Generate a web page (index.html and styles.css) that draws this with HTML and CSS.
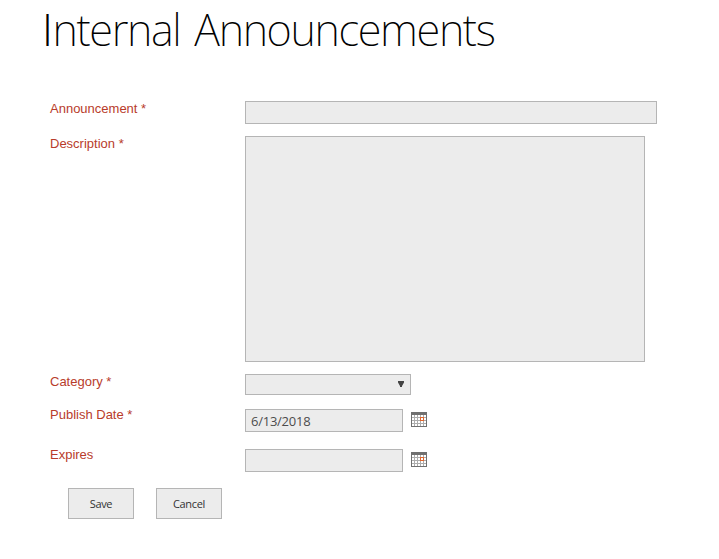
FILE: index.html
```html
<!DOCTYPE html>
<html lang="en">
<head>
<meta charset="utf-8">
<title>Internal Announcements</title>
<link rel="stylesheet" href="styles.css">
</head>
<body>
<h1><span class="initial">I</span>nternal Announcements</h1>
<form class="form">
  <div class="row row-announcement"><label>Announcement *</label><input class="field announcement" type="text"></div>
  <div class="row row-description"><label>Description *</label><textarea class="field description"></textarea></div>
  <div class="row row-category"><label>Category *</label><div class="field category"><svg width="6" height="6" viewBox="0 0 6 6"><path d="M0 0H6V1.5L4 5V6H2V5L0 1.5Z" fill="#444"/></svg></div></div>
  <div class="row row-publish"><label>Publish Date *</label><input class="field date" type="text" value="6/13/2018">
    <svg class="calendar" width="16" height="15" viewBox="0 0 16 15" shape-rendering="crispEdges"><path d="M3 3H4V14H3ZM6 3H7V14H6ZM9 3H10V14H9ZM12 3H13V14H12ZM1 5H15V6H1ZM1 8H15V9H1ZM1 11H15V12H1Z" fill="#adadad"/><path d="M0 0H16V3H0ZM0 3H1V15H0ZM15 3H16V15H15ZM0 14H16V15H0Z" fill="#707070"/><path fill-rule="evenodd" d="M9 5H13V9H9ZM10 6V8H12V6Z" fill="#e0672f"/></svg></div>
  <div class="row row-expires"><label>Expires</label><input class="field date" type="text">
    <svg class="calendar" width="16" height="15" viewBox="0 0 16 15" shape-rendering="crispEdges"><path d="M3 3H4V14H3ZM6 3H7V14H6ZM9 3H10V14H9ZM12 3H13V14H12ZM1 5H15V6H1ZM1 8H15V9H1ZM1 11H15V12H1Z" fill="#adadad"/><path d="M0 0H16V3H0ZM0 3H1V15H0ZM15 3H16V15H15ZM0 14H16V15H0Z" fill="#707070"/><path fill-rule="evenodd" d="M9 5H13V9H9ZM10 6V8H12V6Z" fill="#e0672f"/></svg></div>
  <div class="actions"><button type="button">Save</button><button type="button">Cancel</button></div>
</form>
</body>
</html>
```
FILE: styles.css
```css
* { box-sizing: border-box; }
body { margin: 0; background: #fff; font-family: "Liberation Sans", sans-serif; overflow: hidden; }
h1 { margin: 0; height: 101px; padding-left: 42px; font: 200 43.5px/58px "Noto Sans", "Open Sans", sans-serif; letter-spacing: -1.35px; word-spacing: 4px; color: #000; white-space: nowrap; }
.initial { font-family: "Open Sans", sans-serif; font-weight: 300; letter-spacing: -0.5px; }
.form { padding-left: 50px; }
.row { display: flex; align-items: flex-start; }
.row label { width: 195px; font-size: 13px; line-height: 15px; color: #b83c2b; }
.row-publish label, .row-expires label { margin-top: -2px; }
.field { display: block; margin: 0; border: 1px solid #b5b5b5; border-radius: 0; background: #ececec; outline: 0; resize: none; }
.row-announcement { height: 35px; }
.row-description { height: 238px; }
.row-category { height: 35px; }
.row-publish { height: 40px; }
.row-expires { height: 39px; }
.announcement { width: 412px; height: 23px; }
.description { width: 400px; height: 226px; }
.category { width: 166px; height: 21px; padding: 6px 6px 0 0; display: flex; justify-content: flex-end; }
.date { width: 158px; height: 23px; padding: 1px 5px 0; font: 13px/18px "Open Sans", sans-serif; letter-spacing: -0.25px; color: #4c4c4c; }
.calendar { margin: 3px 0 0 8px; }
.actions { display: flex; gap: 22px; padding-left: 18px; }
button { width: 66px; height: 31px; padding: 0; border: 1px solid #b5b5b5; background: #ececec; color: #333; font: 11px/16px "Open Sans", sans-serif; letter-spacing: -0.35px; }
```
